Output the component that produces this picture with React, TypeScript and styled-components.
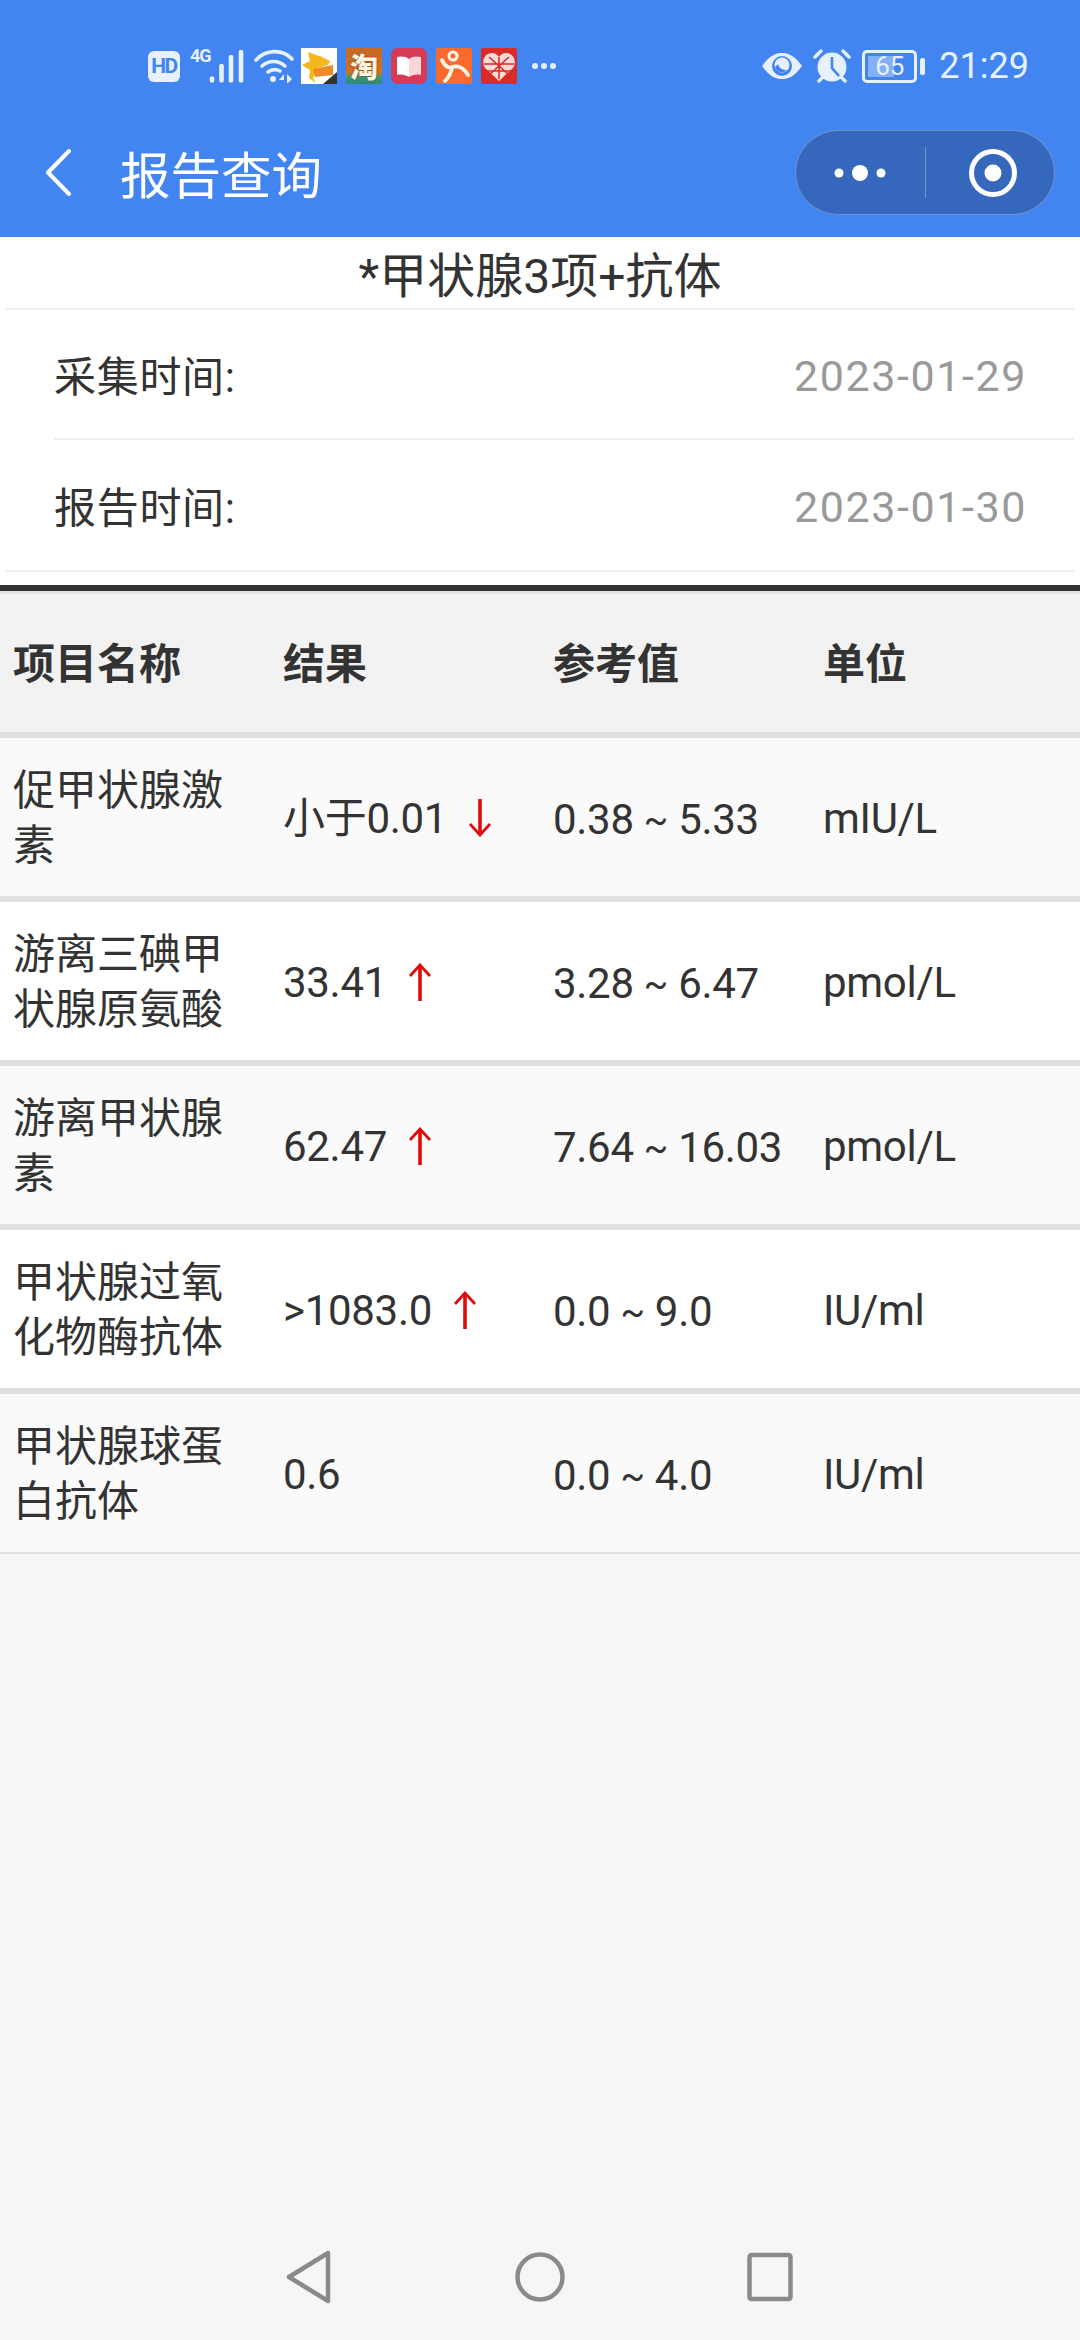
import React from "react";
import styled, { createGlobalStyle } from "styled-components";

const Global = createGlobalStyle`
  html, body { margin: 0; padding: 0; background: #f6f6f6; }
  body { font-family: Roboto, "Noto Sans CJK SC", sans-serif; }
  * { box-sizing: border-box; }
`;

const Page = styled.div`
  width: 1080px;
  height: 2340px;
  display: flex;
  flex-direction: column;
  background: #f6f6f6;
  overflow: hidden;
  color: #333;
`;

const Header = styled.header`
  background: #4285f0;
  height: 237px;
  flex: none;
`;

const StatusBar = styled.div`
  height: 106px;
  padding: 26px 51px 0 148px;
  display: flex;
  justify-content: space-between;
  align-items: flex-start;
  color: #e6f0ff;
`;

const StatusGroup = styled.div`
  height: 80px;
  display: flex;
  align-items: center;
  gap: 10px;
`;

const AppIcons = styled.div`
  display: flex;
  gap: 9px;
  margin-left: -3px;
`;

const AppIcon = styled.div<{ $bg: string; $radius?: number }>`
  width: 36px;
  height: 36px;
  background: ${(p) => p.$bg};
  border-radius: ${(p) => p.$radius ?? 0}px;
  display: flex;
  align-items: center;
  justify-content: center;
  svg { display: block; }
`;

const TaoText = styled.span`
  font: 900 28px/32px "Noto Sans CJK SC", sans-serif;
  color: #fff6e0;
  text-shadow: 0 0 2px #6a2a0a;
`;

const HdBadge = styled.div`
  width: 32px;
  height: 31px;
  background: #e6f0ff;
  border-radius: 6px;
  color: #4285f0;
  font: 700 21px/31px Roboto, sans-serif;
  letter-spacing: -1.5px;
  text-align: center;
`;

const Network = styled.div`
  position: relative;
  width: 54px;
  height: 34px;
  svg { position: absolute; right: 0; bottom: 0; }
`;

const FourG = styled.span`
  position: absolute;
  left: 0;
  top: -2px;
  font: 700 18px/18px Roboto, sans-serif;
  letter-spacing: -1px;
`;

const More = styled.div`
  display: flex;
  gap: 3px;
  margin-left: 5px;
`;

const MoreDot = styled.i`
  width: 6px;
  height: 6px;
  border-radius: 50%;
  background: #e6f0ff;
`;

const Battery = styled.div`
  width: 55px;
  height: 33px;
  border: 3px solid #e6f0ff;
  border-radius: 5px;
  position: relative;
  margin-left: 1px;
  font: 400 26px/27px Roboto, sans-serif;
  text-align: center;
  &::before {
    content: "";
    position: absolute;
    left: 3px;
    top: 3px;
    bottom: 3px;
    width: 26px;
    background: rgba(230, 240, 255, 0.4);
    border-radius: 1px;
  }
`;

const BatteryValue = styled.span`
  position: relative;
`;

const BatteryNub = styled.i`
  width: 5px;
  height: 17px;
  border-radius: 2px;
  background: #e6f0ff;
  margin-left: -7px;
`;

const Clock = styled.span`
  font: 400 36px/40px Roboto, sans-serif;
  margin-left: 4px;
`;

const NavBar = styled.div`
  height: 131px;
  padding: 24px 25px 0 45px;
  display: flex;
  align-items: flex-start;
`;

const BackButton = styled.div`
  width: 75px;
  height: 85px;
  display: flex;
  align-items: center;
`;

const PageTitle = styled.h1`
  margin: 0;
  flex: 1;
  font: 400 50.5px/85px "Noto Sans CJK SC", sans-serif;
  color: #fff;
`;

const Capsule = styled.div`
  width: 260px;
  height: 85px;
  border-radius: 43px;
  background: #3568bc;
  border: 1px solid rgba(255, 255, 255, 0.28);
  display: flex;
  align-items: center;
`;

const CapsulePart = styled.div<{ $nudge?: number }>`
  flex: 1 1 0;
  height: 51px;
  display: flex;
  align-items: center;
  justify-content: center;
  & + & { border-left: 1px solid rgba(255, 255, 255, 0.3); }
  svg { margin-left: ${(p) => p.$nudge ?? 0}px; }
`;

const Info = styled.section`
  background: #fff;
  flex: none;
  height: 348px;
  padding: 0 6px;
`;

const SubjectTitle = styled.h2`
  margin: 0;
  height: 73px;
  padding-top: 15px;
  font: 400 48px/50px Roboto, "Noto Sans CJK SC", sans-serif;
  text-align: center;
  border-bottom: 2px solid #eee;
  color: #333;
`;

const InfoRow = styled.div<{ $inset?: boolean }>`
  height: ${(p) => (p.$inset ? 130 : 132)}px;
  margin-left: ${(p) => (p.$inset ? 48 : 0)}px;
  padding: 0 47px 0 ${(p) => (p.$inset ? 0 : 48)}px;
  display: flex;
  align-items: center;
  justify-content: space-between;
  border-bottom: 2px solid #eee;
  font-size: 42px;
`;

const InfoLabel = styled.span`
  color: #333;
  letter-spacing: 0.7px;
  padding-bottom: 2px;
`;

const InfoValue = styled.span`
  color: #999;
  font-size: 43px;
  letter-spacing: 1.6px;
  padding-top: 3px;
`;

const Table = styled.section`
  flex: none;
  border-top: 6px solid #333;
`;

const TableRow = styled.div<{ $bg: string; $last?: boolean; $head?: boolean }>`
  display: grid;
  grid-template-columns: repeat(4, 270px);
  align-items: center;
  height: ${(p) => (p.$head ? 147 : p.$last ? 160 : 164)}px;
  background: ${(p) => p.$bg};
  border-top: ${(p) => (p.$head ? "3px solid #e2e2e2" : "none")};
  border-bottom: ${(p) => (p.$last ? 2 : 6)}px solid #e0e0e0;
`;

const Cell = styled.div<{ $head?: boolean }>`
  padding: 2px 13px 0;
  font-size: 42px;
  line-height: 55px;
  font-weight: ${(p) => (p.$head ? 700 : 400)};
  font-family: Roboto, "Noto Sans CJK SC", sans-serif;
  letter-spacing: ${(p) => (p.$head ? 0 : -0.3)}px;
  color: #333;
  display: flex;
  align-items: center;
`;

const NameCell = styled(Cell)`
  letter-spacing: 0;
`;

const RangeText = styled.span`
  height: 55px;
  padding-top: 1px;
  white-space: pre;
`;

const Tilde = styled.span`
  font-size: 36px;
  line-height: 1;
  vertical-align: 2px;
`;

const Arrow = styled.svg`
  margin-left: 21px;
  flex: none;
`;

const Spacer = styled.div`
  flex: 1;
`;

const BottomNav = styled.nav`
  flex: none;
  height: 90px;
  padding: 0 0 0 284px;
  display: flex;
  align-items: flex-start;
  svg { display: block; }
`;

const NavSlot = styled.div<{ $w: number }>`
  width: ${(p) => p.$w}px;
`;

const Red = "#e00b0b";

const TrendArrow = ({ up }: { up: boolean }) => (
  <Arrow width="24" height="38" viewBox="0 0 24 38" fill="none" stroke={Red} strokeWidth="2.8">
    {up ? (
      <>
        <path d="M2 13L12 2l10 11" />
        <path d="M12 3v35" strokeWidth="3.6" />
      </>
    ) : (
      <>
        <path d="M2 25l10 11 10-11" />
        <path d="M12 35V0" strokeWidth="3.6" />
      </>
    )}
  </Arrow>
);

const rows = [
  { name: "促甲状腺激素", value: "小于0.01", trend: "down", low: "0.38", high: "5.33", unit: "mIU/L" },
  { name: "游离三碘甲状腺原氨酸", value: "33.41", trend: "up", low: "3.28", high: "6.47", unit: "pmol/L" },
  { name: "游离甲状腺素", value: "62.47", trend: "up", low: "7.64", high: "16.03", unit: "pmol/L" },
  { name: "甲状腺过氧化物酶抗体", value: ">1083.0", trend: "up", low: "0.0", high: "9.0", unit: "IU/ml" },
  { name: "甲状腺球蛋白抗体", value: "0.6", trend: "", low: "0.0", high: "4.0", unit: "IU/ml" },
];

export default function App() {
  return (
    <Page>
      <Global />
      <Header>
        <StatusBar>
          <StatusGroup>
            <HdBadge>HD</HdBadge>
            <Network>
              <FourG>4G</FourG>
              <svg width="36" height="34" viewBox="0 0 36 34" fill="none" stroke="#e6f0ff" strokeWidth="4.6" strokeLinecap="round">
                <path d="M4 31.500v-2M13.500 31.500V17M23 31.500V8M33 31.500V3" />
              </svg>
            </Network>
            <svg width="40" height="34" viewBox="0 0 40 34" fill="none" stroke="#e6f0ff" strokeWidth="3.6" strokeLinecap="round">
              <path d="M2 11C12 0 29 0 38 10" />
              <path d="M8 17c7-6 16-6 23 0" />
              <path d="M14 23c4-3 8-3 12-1" />
              <circle cx="19" cy="30" r="3" fill="#e6f0ff" stroke="none" />
              <path d="M30 25l-5 6h5zM33 25v10l5-5z" fill="#e6f0ff" stroke="none" />
            </svg>
            <AppIcons>
              <AppIcon $bg="#fff">
                <svg width="36" height="36" viewBox="0 0 36 36">
                  <path d="M1 17l8-4-2-9 8 3 4 1 10 5-2 4-10 3-5 10 3 5-7-5 1-8z" fill="#f5b81c" />
                  <path d="M12 21l20-4v10l-18 2z" fill="#f08a24" />
                  <path d="M36 36H22l14-12z" fill="#333" />
                </svg>
              </AppIcon>
              <AppIcon $bg="linear-gradient(#c8692a 0%, #d2701f 68%, #3f9a7a 80%, #2a8a73 100%)">
                <TaoText>淘</TaoText>
              </AppIcon>
              <AppIcon $bg="#d63a55" $radius={7}>
                <svg width="36" height="36" viewBox="0 0 36 36">
                  <path d="M6 9c4-1 9-1 12 2v18c-3-2-8-3-12-2z" fill="#fff" />
                  <path d="M18 11c3-3 8-3 12-2v18c-4-1-9 0-12 2z" fill="#fbd5dc" />
                </svg>
              </AppIcon>
              <AppIcon $bg="#f96a2f" $radius={3}>
                <svg width="36" height="36" viewBox="0 0 36 36" fill="none" stroke="#fff6ea">
                  <circle cx="17" cy="8" r="4" strokeWidth="3" />
                  <path d="M6 12c2 5 5 8 10 8-1 5-3 9-7 13" strokeWidth="3.8" strokeLinecap="round" />
                  <path d="M16 19c6-2 12 1 16 8" strokeWidth="3.8" strokeLinecap="round" />
                </svg>
              </AppIcon>
              <AppIcon $bg="#d92c26" $radius={2}>
                <svg width="36" height="36" viewBox="0 0 36 36">
                  <path d="M18 33L4 20C0 14 3 5 11 5c3 0 6 2 7 4 1-2 4-4 7-4 8 0 11 9 7 15z" fill="#f7d9d6" />
                  <path d="M8 9l20 18M28 9L8 27M18 9v22M3 16h30M5 23h26" stroke="#d92c26" strokeWidth="1.6" />
                </svg>
              </AppIcon>
            </AppIcons>
            <More>
              <MoreDot />
              <MoreDot />
              <MoreDot />
            </More>
          </StatusGroup>
          <StatusGroup>
            <svg width="42" height="28" viewBox="0 0 42 28">
              <path d="M1 14C9 3 15 1 21 1s12 2 20 13c-8 11-14 13-20 13S9 25 1 14z" fill="#e6f0ff" />
              <circle cx="21" cy="14" r="10" fill="#4285f0" />
              <circle cx="21" cy="13" r="7.5" fill="#e6f0ff" />
              <path d="M14 15a7 7 0 0 0 12 3c-3 0-8-1-9-6z" fill="#4285f0" />
            </svg>
            <svg width="38" height="36" viewBox="0 0 38 36">
              <circle cx="19" cy="19" r="14.5" fill="#e6f0ff" />
              <path d="M19 9v11l7 8" fill="none" stroke="#4285f0" strokeWidth="2.6" />
              <path d="M2 9l6-6M36 9l-6-6M6 33l4-4M32 33l-4-4" stroke="#e6f0ff" strokeWidth="3.4" strokeLinecap="round" />
            </svg>
            <Battery>
              <BatteryValue>65</BatteryValue>
            </Battery>
            <BatteryNub />
            <Clock>21:29</Clock>
          </StatusGroup>
        </StatusBar>
        <NavBar>
          <BackButton>
            <svg width="27" height="47" viewBox="0 0 27 47" fill="none" stroke="#fff" strokeWidth="4" strokeLinecap="round" strokeLinejoin="round">
              <path d="M24 2L3 23.500l21 21.500" />
            </svg>
          </BackButton>
          <PageTitle>报告查询</PageTitle>
          <Capsule>
            <CapsulePart>
              <svg width="52" height="18" viewBox="0 0 52 18" fill="#fff">
                <circle cx="5" cy="9" r="4.5" />
                <circle cx="26" cy="9" r="8" />
                <circle cx="47" cy="9" r="4.5" />
              </svg>
            </CapsulePart>
            <CapsulePart $nudge={6}>
              <svg width="48" height="48" viewBox="0 0 48 48">
                <circle cx="24" cy="24" r="21.5" fill="none" stroke="#fff" strokeWidth="5" />
                <circle cx="24" cy="24" r="8.5" fill="#fff" />
              </svg>
            </CapsulePart>
          </Capsule>
        </NavBar>
      </Header>

      <Info>
        <SubjectTitle>*甲状腺3项+抗体</SubjectTitle>
        <InfoRow $inset>
          <InfoLabel>采集时间:</InfoLabel>
          <InfoValue>2023-01-29</InfoValue>
        </InfoRow>
        <InfoRow>
          <InfoLabel>报告时间:</InfoLabel>
          <InfoValue>2023-01-30</InfoValue>
        </InfoRow>
      </Info>

      <Table>
        <TableRow $bg="#f2f2f2" $head>
          <Cell $head>项目名称</Cell>
          <Cell $head>结果</Cell>
          <Cell $head>参考值</Cell>
          <Cell $head>单位</Cell>
        </TableRow>
        {rows.map((r, i) => (
          <TableRow key={r.name} $bg={i % 2 === 0 ? "#fafafa" : "#fff"} $last={i === rows.length - 1}>
            <NameCell>{r.name}</NameCell>
            <Cell>
              {r.value}
              {r.trend && <TrendArrow up={r.trend === "up"} />}
            </Cell>
            <Cell>
              <RangeText>
                {r.low} <Tilde>~</Tilde> {r.high}
              </RangeText>
            </Cell>
            <Cell>{r.unit}</Cell>
          </TableRow>
        ))}
      </Table>

      <Spacer />

      <BottomNav>
        <NavSlot $w={229}>
          <svg width="48" height="54" viewBox="0 0 48 54" fill="none" stroke="#8a8a8a" strokeWidth="4.5" strokeLinejoin="round">
            <path d="M44 3L5 27l39 24z" />
          </svg>
        </NavSlot>
        <NavSlot $w={234}>
          <svg width="54" height="54" viewBox="0 0 54 54" fill="none" stroke="#8a8a8a" strokeWidth="4.5">
            <circle cx="27" cy="27" r="22.5" />
          </svg>
        </NavSlot>
        <NavSlot $w={46}>
          <svg width="46" height="54" viewBox="0 0 46 54" fill="none" stroke="#8a8a8a" strokeWidth="4.5" strokeLinejoin="round">
            <rect x="2.5" y="5" width="41" height="44" rx="2" />
          </svg>
        </NavSlot>
      </BottomNav>
    </Page>
  );
}
